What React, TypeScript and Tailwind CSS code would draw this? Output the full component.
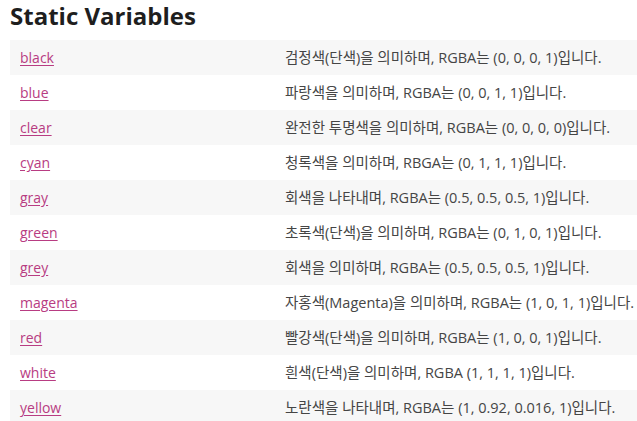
import React from "react";

const rows: [string, string][] = [
  ["black", "검정색(단색)을 의미하며, RGBA는 (0, 0, 0, 1)입니다."],
  ["blue", "파랑색을 의미하며, RGBA는 (0, 0, 1, 1)입니다."],
  ["clear", "완전한 투명색을 의미하며, RGBA는 (0, 0, 0, 0)입니다."],
  ["cyan", "청록색을 의미하며, RBGA는 (0, 1, 1, 1)입니다."],
  ["gray", "회색을 나타내며, RGBA는 (0.5, 0.5, 0.5, 1)입니다."],
  ["green", "초록색(단색)을 의미하며, RGBA는 (0, 1, 0, 1)입니다."],
  ["grey", "회색을 의미하며, RGBA는 (0.5, 0.5, 0.5, 1)입니다."],
  ["magenta", "자홍색(Magenta)을 의미하며, RGBA는 (1, 0, 1, 1)입니다."],
  ["red", "빨강색(단색)을 의미하며, RGBA는 (1, 0, 0, 1)입니다."],
  ["white", "흰색(단색)을 의미하며, RGBA (1, 1, 1, 1)입니다."],
  ["yellow", "노란색을 나타내며, RGBA는 (1, 0.92, 0.016, 1)입니다."],
];

export default function App() {
  return (
    <div
      className="bg-white w-[637px] h-[421px] overflow-hidden"
      style={{ fontFamily: '"Open Sans", "Noto Sans CJK KR", sans-serif' }}
    >
      <h2 className="pl-[10px] pb-[9px] text-[24px] leading-[31px] font-bold text-[#1e1e1e]">
        Static Variables
      </h2>
      <div className="ml-[10px]">
        {rows.map(([name, desc], i) => (
          <div
            key={name}
            className={`flex h-[35px] items-center ${i % 2 === 0 ? "bg-[#f7f7f7]" : "bg-white"}`}
          >
            <div className="w-[275px] shrink-0 pl-[10px] text-[14px]">
              <a className="text-[#b83c82] underline underline-offset-2" href="#">
                {name}
              </a>
            </div>
            <div className="text-[#454545] whitespace-nowrap text-[14.5px]">{desc}</div>
          </div>
        ))}
      </div>
    </div>
  );
}
